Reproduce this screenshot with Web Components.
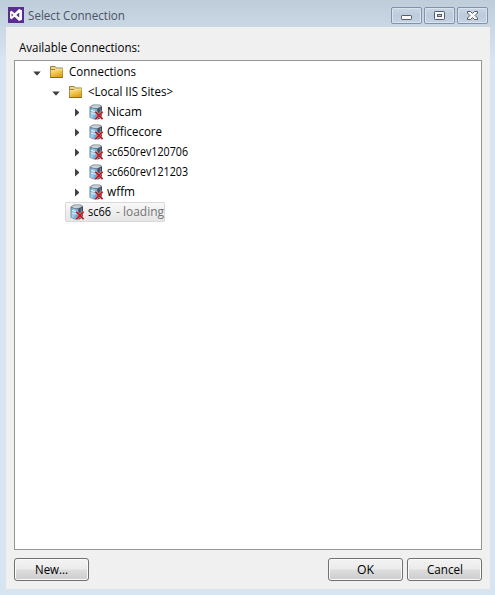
<!DOCTYPE html>
<html lang="en"><head><meta charset="utf-8"><title>Select Connection</title>
<style>html,body{margin:0;height:100%;overflow:hidden}body{font:12px/20px "Open Sans","Noto Sans",sans-serif;color:#000}</style></head>
<body><connection-dialog></connection-dialog>
<script>
function define(name, html, ready) {
  const t = document.createElement('template');
  t.innerHTML = html;
  customElements.define(name, class extends HTMLElement {
    connectedCallback() {
      if (this.shadowRoot) return;
      this.attachShadow({mode: 'open'}).append(t.content.cloneNode(true));
      if (ready) ready(this, this.shadowRoot);
    }
  });
}
// Label whose glyphs are condensed to a given width.
define('fit-text', `<style>:host{display:block;flex:none;white-space:nowrap;height:20px}span{display:inline-block;transform-origin:0 50%;line-height:20px}</style><span><slot></slot></span>`, (el, root) => {
  const w = +el.getAttribute('w'), s = root.querySelector('span');
  el.style.width = w + 'px';
  s.style.transform = `scaleX(${w / s.getBoundingClientRect().width})`;
});
define('app-logo', `<style>:host{display:block;width:16px;height:16px}svg{display:block}</style>
<svg width="16" height="16"><path fill="#5c2d91" d="M0 0h16v16H0z"/><path fill="#fff" fill-rule="evenodd" d="M11 2l3 1.3v9.4L11 14 6.6 9.8 3.5 12.2 2 11.3V4.7l1.5-.9 3.1 2.4zM11.2 5.5L8.3 8l2.9 2.5zM3.6 6.3v3.4L5.3 8z"/></svg>`);
define('folder-icon', `<style>:host{display:block;flex:none;width:14px;height:14px}svg{display:block}</style>
<svg width="14" height="14"><defs><linearGradient id="g" x2=".5" y2="1"><stop stop-color="#fdeaa8"/><stop offset=".45" stop-color="#f5cc59"/><stop offset="1" stop-color="#dfa51c"/></linearGradient></defs>
<path fill="#9a7f42" d="M0 2q0-1 1-1h4l1.5 1.5H12q1 0 1 1V13H0z"/><path fill="#f3d780" d="M1 2h4l1 1v1H1z"/><path fill="#fff6d0" d="M6 3.5h6.5V5H5z"/><path fill="url(#g)" d="M.8 5H5l1-.8h6.4V12H.8z"/><path fill="#8a691f" d="M.3 12h12.5v.9H.3z"/></svg>`);
define('server-icon', `<style>:host{display:block;flex:none;width:16px;height:16px}svg{display:block}</style>
<svg width="16" height="16"><defs><linearGradient id="b" x2="1" y2=".3"><stop stop-color="#3f86bd"/><stop offset=".4" stop-color="#a5d3f0"/><stop offset="1" stop-color="#4f9bd2"/></linearGradient></defs>
<g transform="translate(1)"><path fill="#7b828b" d="M.5 2.8L4 .5h6.5L13 2v11.5l-3.5 2H5l-4.5-2z"/><path fill="#c9cfd6" d="M1.6 2.8L4.5 1.2h5.7L12 2.3 8.7 4H4.5z"/><path fill="url(#b)" d="M1 3.6L4.5 5h4v10H5.2L1 13z"/><path fill="#3c4a60" d="M8.5 4.8L13 2.4v10.9l-4.5 2z"/><path fill="#66758a" d="M10.5 4.6l1.5-.8V9l-1.5 1z"/><path stroke="#def1fd" fill="none" d="M1.8 6.2l3 1.2h3M1.8 8.8l3 1.2h2"/>
<path d="M6.5 7.7l7 7.3M13.5 7.7L6.5 15" stroke="#f6dede" stroke-width="2.6" opacity=".65"/><path d="M6.3 7.7l7.3 7.4M13.6 7.7l-7.3 7.4" stroke="#c1181d" stroke-width="1.7"/></g></svg>`);
define('tree-arrow', `<style>:host{display:block;flex:none;width:8px;height:9px}svg{display:block}.o{display:none}:host([open]) .o{display:block}:host([open]) .c{display:none}</style>
<svg width="8" height="9" fill="#404040"><path class="o" d="M.3 3.5h7.4L4.5 7.2h-1z"/><path class="c" d="M3 .5L7 4v1L3 8.5z"/></svg>`);
define('tree-row', `<style>:host{display:flex;height:20px;align-items:center}.in{display:flex;align-items:center;height:20px;box-sizing:border-box}tree-arrow{margin-right:9px}:host([kind=server]) tree-arrow{margin-right:8px}.icon{margin-right:5px}server-icon.icon{margin-right:3px}:host([selected]) tree-arrow{display:none}:host([selected]) .in{width:100px;border:1px solid #d9d9d9;background:linear-gradient(#f8f8f8,#e5e5e5);padding-left:3px;border-radius:1px}</style>
<tree-arrow></tree-arrow><div class="in"></div>`, (el, root) => {
  const k = el.getAttribute('kind'), box = root.querySelector('.in');
  el.style.paddingLeft = el.getAttribute('indent') + 'px';
  root.querySelector('tree-arrow').toggleAttribute('open', k === 'folder');
  const i = document.createElement(k + '-icon'); i.className = 'icon';
  box.append(i, document.createElement('slot'));
});
define('push-button', `<style>:host{display:flex;justify-content:center;box-sizing:border-box;width:75px;height:23px;padding-top:1px;border:1px solid #707070;border-radius:3px;background:linear-gradient(#f3f3f3,#ebebeb 48%,#dddddd 52%,#cdcdcd);box-shadow:inset 0 0 0 1px #fafafa}</style><slot></slot>`);
define('caption-button', `<style>:host{display:block;box-sizing:border-box;width:31px;height:17px;border:1px solid #8291a9;border-radius:2px;background:linear-gradient(#c9d6e5,#bccbdd 50%,#c5d3e4);box-shadow:inset 0 0 0 1px #d9e4ef}svg{display:block}</style>
<svg width="29" height="15"></svg>`, (el, root) => {
  root.querySelector('svg').innerHTML = {
    min: '<rect x="9.5" y="7.5" width="10" height="4" rx=".7" fill="#fafafa" stroke="#555b69"/>',
    max: '<rect x="9.5" y="3.5" width="10" height="8" rx=".7" fill="#fafafa" stroke="#555b69"/><rect x="12.5" y="6.5" width="4" height="2" fill="#b9c8da" stroke="#555b69"/>',
    close: '<path d="M9.5 3.5h3l2 2 2-2h3v1.5l-2.5 2.5 2.5 2.5v1.5h-3l-2-2-2 2h-3V10L12 7.5 9.5 5z" fill="#fafafa" stroke="#555b69"/>'
  }[el.getAttribute('kind')];
});
define('connection-dialog', `<style>
:host{display:flex;flex-direction:column;box-sizing:border-box;width:495px;height:595px;padding:0 5px 6px 6px;background:linear-gradient(#bfccda,#d7e4f2 60px)}
header{display:flex;height:27px;box-sizing:border-box;padding:7px 2px 0;color:#4b5463}
header fit-text{margin:-1px 0 0 4px}
.caps{display:flex;gap:2px;margin-left:auto}
main{display:flex;flex-direction:column;flex:1;background:#f0f0f0;padding:11px 8px 8px;box-sizing:border-box;min-height:0}
.title{margin-left:5px;height:22px}
.tree{flex:1;box-sizing:border-box;border:1px solid #969696;background:#fff;padding-top:1px}
.gray{color:#737373;margin-left:5px}
footer{display:flex;gap:4px;margin-top:8px;height:23px}.sp{flex:1}
</style>
<header><app-logo></app-logo><fit-text w="97">Select Connection</fit-text><div class="caps"><caption-button kind="min"></caption-button><caption-button kind="max"></caption-button><caption-button kind="close"></caption-button></div></header>
<main><div class="title"><fit-text w="121">Available Connections:</fit-text></div>
<div class="tree">
<tree-row kind="folder" indent="18"><fit-text w="67">Connections</fit-text></tree-row>
<tree-row kind="folder" indent="37"><fit-text w="85">&lt;Local IIS Sites&gt;</fit-text></tree-row>
<tree-row kind="server" indent="57"><fit-text w="35">Nicam</fit-text></tree-row>
<tree-row kind="server" indent="57"><fit-text w="55">Officecore</fit-text></tree-row>
<tree-row kind="server" indent="57"><fit-text w="81">sc650rev120706</fit-text></tree-row>
<tree-row kind="server" indent="57"><fit-text w="81">sc660rev121203</fit-text></tree-row>
<tree-row kind="server" indent="57"><fit-text w="28">wffm</fit-text></tree-row>
<tree-row kind="server" indent="50" selected><fit-text w="23">sc66</fit-text><fit-text class="gray" w="48">- loading</fit-text></tree-row>
</div>
<footer><push-button><fit-text w="33">New...</fit-text></push-button><div class="sp"></div><push-button><fit-text w="17">OK</fit-text></push-button><push-button><fit-text w="36">Cancel</fit-text></push-button></footer></main>`);
</script></body></html>
